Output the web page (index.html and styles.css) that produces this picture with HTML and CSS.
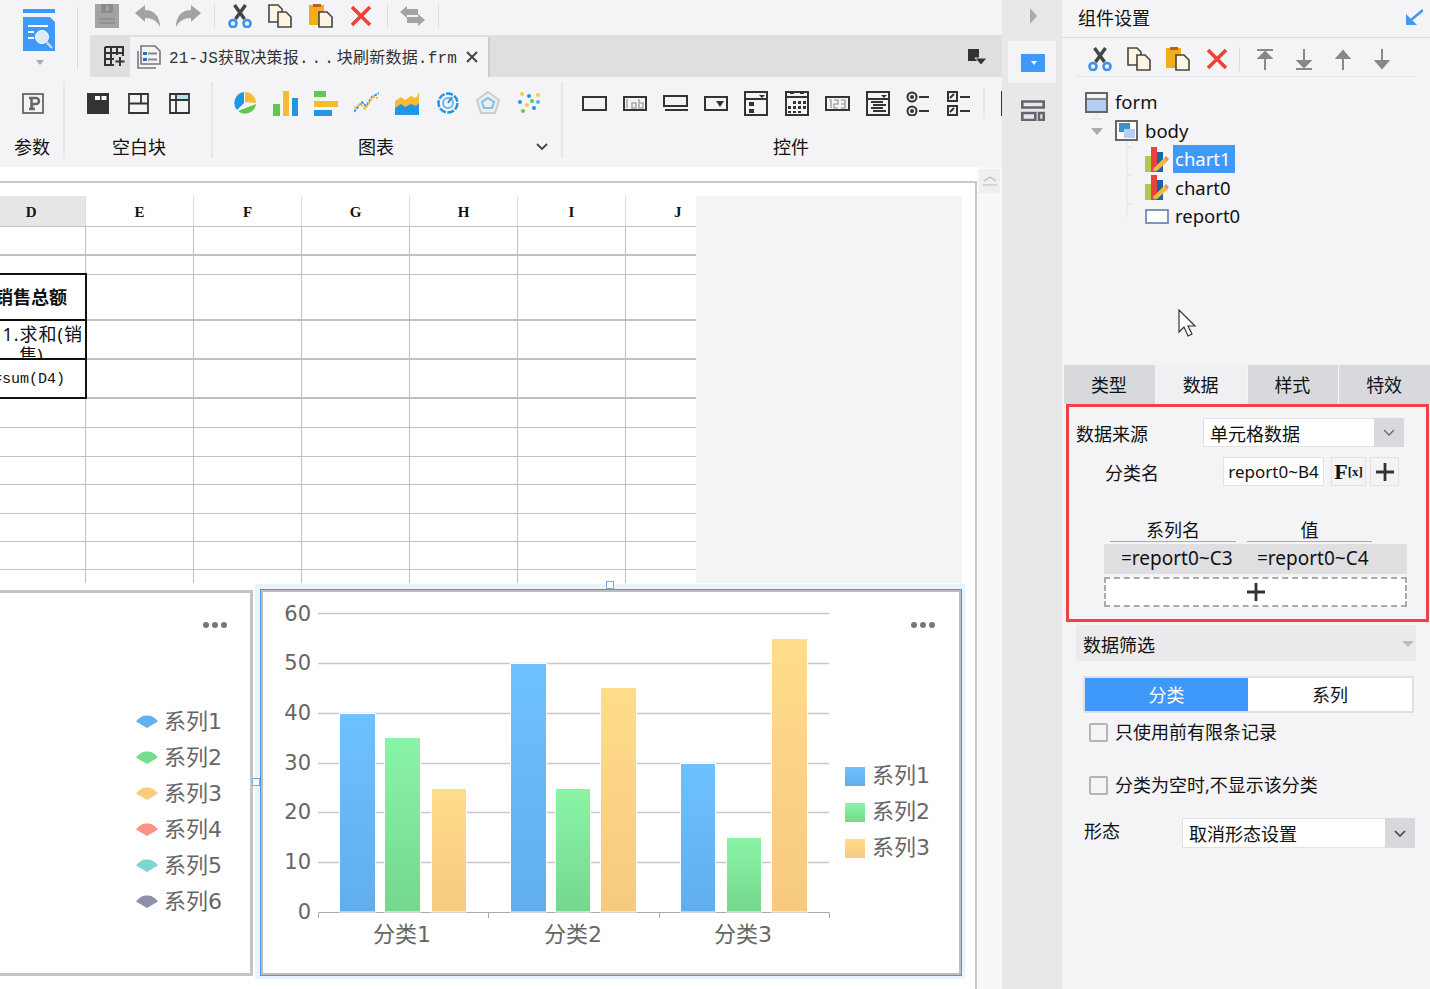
FILE: index.html
```html
<!DOCTYPE html>
<html lang="zh-CN">
<head>
    <meta charset="UTF-8">
    <title>决策报表设计器</title>
    <link rel="stylesheet" href="styles.css">
</head>
<body>
    <!-- Icones reutilizados -->
    <svg class="defs" width="0" height="0">
        <symbol id="i-cut" viewBox="0 0 24 24">
            <path d="M7.500 15 17.500 1M16.500 15 6.500 1" stroke="#444" stroke-width="3.400" fill="none"/>
            <circle cx="5" cy="19.500" r="3.500" stroke="#3f8fef" stroke-width="2.600" fill="none"/>
            <circle cx="19" cy="19.500" r="3.500" stroke="#3f8fef" stroke-width="2.600" fill="none"/>
        </symbol>
        <symbol id="i-copy" viewBox="0 0 24 24">
            <path d="M1 1h9l4 4v13H1z" fill="#fdf5e1" stroke="#444" stroke-width="1.600"/>
            <path d="M10 8h8l5 5v10H10z" fill="#fdf5e1" stroke="#444" stroke-width="1.600"/>
        </symbol>
        <symbol id="i-paste" viewBox="0 0 24 24">
            <rect x="0" y="1" width="15" height="20" fill="#f2ae16"/>
            <rect x="4" y="0" width="8" height="3" fill="#b9602a"/>
            <path d="M10 8h8l5 5v10H10z" fill="#fdf5e1" stroke="#444" stroke-width="1.600"/>
        </symbol>
        <symbol id="i-del" viewBox="0 0 24 24">
            <path d="M3 3 21 21M21 3 3 21" stroke="#ee4138" stroke-width="3.600" fill="none"/>
        </symbol>
        <symbol id="i-chart" viewBox="0 0 24 25">
            <rect x="0" y="9" width="6" height="16" fill="#b5c84e"/>
            <rect x="6" y="0" width="6" height="25" fill="#e8423c"/>
            <rect x="12" y="5" width="6" height="20" fill="#1767a8"/>
            <path d="M8 22 19 11l4 3-11 10H8z" fill="#f5b940"/>
            <path d="M19 11l2-2 3 3-2 2z" fill="#ef8a6a"/>
            <path d="M8 20l3 4H8z" fill="#aaa"/>
        </symbol>
        <symbol id="i-fan" viewBox="0 0 22 13">
            <path d="M0 6.500C4 1.500 7 .5 11 .5s7 1 11 6l-11 6.500z"/>
        </symbol>
    </svg>

    <div class="app">
        <div class="main">
            <div class="top">
                <div class="logo-col">
                    <svg width="32" height="42" viewBox="0 0 32 42">
                        <rect width="32" height="4" fill="#3f99fb"/>
                        <path d="M0 8h27l5 5v29H0z" fill="#3f99fb"/>
                        <path d="M5 17h20M5 23h6M5 29h6" stroke="#fff" stroke-width="2"/>
                        <circle cx="19" cy="28" r="6.500" fill="#dcebfa" stroke="#fff" stroke-width="1"/>
                        <path d="M23.500 33 29 39" stroke="#c8d8ea" stroke-width="2.500"/>
                    </svg>
                    <span class="logo-arrow"></span>
                </div>
                <div class="top-right">
                    <div class="quick">
                        <span class="tool">
                            <svg width="24" height="24" viewBox="0 0 24 24"><path d="M0 0h24v24H0z" fill="#a3a3a3"/><rect x="6" y="0" width="12" height="9" fill="#8c8c8c"/><rect x="11" y="2" width="3" height="5" fill="#a3a3a3"/><path d="M4 15h16M4 19h16" stroke="#8c8c8c" stroke-width="1.500"/></svg>
                        </span>
                        <span class="tool">
                            <svg width="26" height="24" viewBox="0 0 26 24"><path d="M0 9 10 1v5c9 0 15 6 15 17-3-6-8-9-15-9v4z" fill="#a3a3a3"/></svg>
                        </span>
                        <span class="tool">
                            <svg width="26" height="24" viewBox="0 0 26 24"><path d="M26 9 16 1v5C7 6 1 12 1 23c3-6 8-9 15-9v4z" fill="#a3a3a3"/></svg>
                        </span>
                        <span class="sep"></span>
                        <span class="tool"><svg width="24" height="24"><use href="#i-cut"/></svg></span>
                        <span class="tool"><svg width="24" height="24"><use href="#i-copy"/></svg></span>
                        <span class="tool"><svg width="24" height="24"><use href="#i-paste"/></svg></span>
                        <span class="tool"><svg width="24" height="24"><use href="#i-del"/></svg></span>
                        <span class="sep"></span>
                        <span class="tool">
                            <svg width="25" height="20" viewBox="0 0 25 20"><path d="M0 6 7 0v3h11v6H7v3zM25 14l-7-6v3H7v6h11v3z" fill="#a3a3a3"/></svg>
                        </span>
                        <span class="sep"></span>
                    </div>
                    <div class="tabbar">
                        <span class="tab-add">
                            <svg width="21" height="21" viewBox="0 0 21 21"><path d="M1 1h18v9M1 1v18h9M7 1v18M13 1v8M1 7h18M1 13h9" stroke="#333" stroke-width="2" fill="none"/><path d="M16 11v9M11.500 15.500h9" stroke="#333" stroke-width="2"/></svg>
                        </span>
                        <div class="tab">
                            <svg width="24" height="24" viewBox="0 0 24 24"><path d="M4 1h14l5 5v13H4z" fill="#f4f4f6" stroke="#777" stroke-width="1.600"/><path d="M1 6v17h18" fill="none" stroke="#777" stroke-width="1.600"/><rect x="6" y="7" width="4" height="3" fill="#2a6fc0"/><rect x="6" y="13" width="4" height="3" fill="#2a6fc0"/><path d="M11 8.500h9M11 14.500h9" stroke="#888" stroke-width="2"/></svg>
                            <span class="tab-title">21-JS获取决策报<span class="dots">...</span>块刷新数据.frm</span>
                            <svg class="tab-close" width="12" height="12" viewBox="0 0 12 12"><path d="M1 1 11 11M11 1 1 11" stroke="#444" stroke-width="2"/></svg>
                        </div>
                        <svg class="tab-menu" width="19" height="17" viewBox="0 0 19 17"><rect width="11" height="12" fill="#333"/><path d="M7 9h12l-6 7z" fill="#333" stroke="#dfdfe1"/></svg>
                    </div>
                </div>
            </div>

            <div class="ribbon">
                <div class="rgroup rg-param">
                    <div class="ricons">
                        <span class="ricon">
                            <svg width="22" height="21" viewBox="0 0 22 21"><rect x="1" y="1" width="20" height="19" fill="none" stroke="#666" stroke-width="1.800"/><path d="M7 5h7a3 3 0 0 1 0 6h-4v5M7 16h6M9.500 5v11" stroke="#666" stroke-width="2.500" fill="none"/></svg>
                        </span>
                    </div>
                    <div class="rlabel">参数</div>
                </div>
                <div class="rgroup rg-blank">
                    <div class="ricons">
                        <span class="ricon"><svg width="22" height="21" viewBox="0 0 22 21"><rect width="22" height="21" fill="#333"/><rect x="8" y="3" width="5" height="4" fill="#fff"/><rect x="14.500" y="3" width="5" height="4" fill="#fff"/></svg></span>
                        <span class="ricon"><svg width="21" height="21" viewBox="0 0 21 21"><path d="M1 1h19v19H1zM1 10.500h19M13 1v9.500" fill="none" stroke="#333" stroke-width="1.800"/></svg></span>
                        <span class="ricon"><svg width="21" height="21" viewBox="0 0 21 21"><rect x="7" y="1" width="13" height="6" fill="#b5e0f5"/><path d="M1 1h19v19H1zM1 7h19M7 1v19" fill="none" stroke="#333" stroke-width="1.800"/></svg></span>
                    </div>
                    <div class="rlabel">空白块</div>
                </div>
                <div class="rgroup rg-chart">
                    <div class="ricons">
                        <span class="ricon"><svg width="24" height="24" viewBox="0 0 24 24"><path d="M12 11V1a11 11 0 0 1 11 11z" fill="#f7bb33"/><path d="M23 13a11 11 0 0 1-18 7z" fill="#5ec94e"/><path d="M11 1v11L4 19A11 11 0 0 1 11 1z" fill="#2196e3"/></svg></span>
                        <span class="ricon"><svg width="25" height="25" viewBox="0 0 25 25"><rect y="13" width="7" height="12" fill="#5ec94e"/><rect x="10" width="6" height="25" fill="#f7bb33"/><rect x="19" y="7" width="6" height="18" fill="#2196e3"/></svg></span>
                        <span class="ricon"><svg width="24" height="25" viewBox="0 0 24 25"><rect width="12" height="6" fill="#5ec94e"/><rect y="10" width="24" height="6" fill="#f7bb33"/><rect y="19" width="18" height="6" fill="#2196e3"/></svg></span>
                        <span class="ricon"><svg width="25" height="22" viewBox="0 0 25 22"><path d="M0 20 8 10l4 4 6-9 7-4" fill="none" stroke="#2196e3" stroke-width="1.800" stroke-dasharray="3 1"/><path d="M0 16l7-4 4 5 8-12 5 1" fill="none" stroke="#f7bb33" stroke-width="1.800" stroke-dasharray="3 1"/></svg></span>
                        <span class="ricon"><svg width="24" height="24" viewBox="0 0 24 24"><path d="M0 10 6 6l4 3 6-4 5 2 3-6v23H0z" fill="#f7bb33"/><path d="M0 17l6-4 4 3 6-3 5 2 3-3v12H0z" fill="#2196e3"/></svg></span>
                        <span class="ricon"><svg width="22" height="22" viewBox="0 0 22 22"><circle cx="11" cy="11" r="9.500" fill="none" stroke="#2196e3" stroke-width="2.500" stroke-dasharray="7 1.500"/><circle cx="11" cy="11" r="5" fill="none" stroke="#6bb8ee" stroke-width="2"/><path d="M11 11l4-6" stroke="#2196e3" stroke-width="2"/></svg></span>
                        <span class="ricon"><svg width="24" height="24" viewBox="0 0 24 24"><path d="M12 1 23 9l-4 13H5L1 9z" fill="#eee" stroke="#ccc" stroke-width="2"/><path d="M12 7l6 4-2 6H8l-2-6z" fill="none" stroke="#7cbfee" stroke-width="2"/></svg></span>
                        <span class="ricon"><svg width="24" height="24" viewBox="0 0 24 24"><circle cx="5" cy="3" r="2" fill="#f7c84a"/><circle cx="12" cy="5" r="2" fill="#2196e3"/><circle cx="21" cy="4" r="2" fill="#f7c84a"/><circle cx="3" cy="11" r="2" fill="#2196e3"/><circle cx="15" cy="10" r="2" fill="#5ec94e"/><circle cx="21" cy="11" r="2" fill="#5cb4ee"/><circle cx="10" cy="14" r="2" fill="#f7c84a"/><circle cx="6" cy="20" r="2" fill="#5ec94e"/><circle cx="17" cy="17" r="2" fill="#2196e3"/></svg></span>
                    </div>
                    <div class="rlabel">图表</div>
                    <svg class="rg-more" width="12" height="8" viewBox="0 0 12 8"><path d="M1 1l5 5 5-5" fill="none" stroke="#444" stroke-width="1.800"/></svg>
                </div>
                <div class="rgroup rg-ctrl">
                    <div class="ricons">
                        <span class="ricon"><svg class="ctl" width="25" height="15" viewBox="0 0 25 15"><rect x="1" y="1" width="23" height="13"/></svg></span>
                        <span class="ricon"><svg class="ctl" width="24" height="15" viewBox="0 0 24 15"><rect x="1" y="1" width="22" height="13"/><path class="ctl-soft" d="M4 3v9M9 12V7h4v5zM16 3v9h4V7h-4"/></svg></span>
                        <span class="ricon"><svg class="ctl" width="25" height="16" viewBox="0 0 25 16"><rect x="1" y="1" width="23" height="10"/><path d="M2 15h23"/></svg></span>
                        <span class="ricon"><svg class="ctl" width="24" height="15" viewBox="0 0 24 15"><rect x="1" y="1" width="22" height="13"/><path class="ctl-solid" d="M12 5h8l-4 6z"/></svg></span>
                        <span class="ricon"><svg class="ctl" width="24" height="25" viewBox="0 0 24 25"><rect x="1" y="1" width="22" height="23"/><path d="M1 8h22"/><path class="ctl-solid" d="M15 4h6l-3 3zM5 11h5v4H5zM5 18h5v4H5z"/></svg></span>
                        <span class="ricon"><svg class="ctl" width="24" height="25" viewBox="0 0 24 25"><rect x="1" y="1" width="22" height="23"/><path d="M1 6h22" stroke-width="3"/><path class="ctl-solid" d="M5 0h4v3H5zM15 0h4v3h-4zM8 10h3v3H8zM13 10h3v3h-3zM18 10h3v3h-3zM3 15h3v3H3zM8 15h3v3H8zM13 15h3v3h-3zM18 15h3v3h-3zM3 20h3v2H3zM8 20h3v2H8zM13 20h3v2h-3z"/></svg></span>
                        <span class="ricon"><svg class="ctl" width="25" height="15" viewBox="0 0 25 15"><rect x="1" y="1" width="23" height="13"/><path class="ctl-soft" d="M4 4h2v8M9 4h4v4H9v4h4M16 4h4v8h-4M16 8h4"/></svg></span>
                        <span class="ricon"><svg class="ctl" width="24" height="25" viewBox="0 0 24 25"><rect x="1" y="1" width="22" height="23"/><path d="M1 8h22M5 11h12M7 14h13M5 17h12M7 20h13"/><path class="ctl-solid" d="M15 4h6l-3 3z"/></svg></span>
                        <span class="ricon"><svg class="ctl" width="24" height="25" viewBox="0 0 24 25"><circle cx="6" cy="6" r="4.500"/><circle cx="6" cy="20" r="4.500"/><circle class="ctl-solid" cx="6" cy="6" r="2"/><circle class="ctl-solid" cx="6" cy="20" r="2"/><path d="M13 6h10M13 20h10"/></svg></span>
                        <span class="ricon"><svg class="ctl" width="24" height="25" viewBox="0 0 24 25"><rect x="1" y="1" width="9" height="9"/><rect x="1" y="15" width="9" height="9"/><path d="M3 7l4-4M3 21l4-4M13 6h10M13 20h10"/></svg></span>
                        <span class="rsep"></span>
                        <span class="ricon"><svg class="ctl" width="24" height="25" viewBox="0 0 24 25"><rect x="1" y="1" width="22" height="23"/></svg></span>
                    </div>
                    <div class="rlabel">控件</div>
                </div>
            </div>

            <div class="canvas">
                <div class="sheet">
                    <div class="grid-wrap">
                        <table class="grid">
                            <tr class="r-head">
                                <th class="col-on">D</th><th>E</th><th>F</th><th>G</th><th>H</th><th>I</th><th class="col-j">J</th>
                            </tr>
                            <tr class="r29 thick"><td></td><td></td><td></td><td></td><td></td><td></td><td></td></tr>
                            <tr class="r19"><td></td><td></td><td></td><td></td><td></td><td></td><td></td></tr>
                            <tr class="r46 thick"><td class="cell-b cell-title">销售总额</td><td></td><td></td><td></td><td></td><td></td><td></td></tr>
                            <tr class="r39 thick"><td class="cell-b"><div class="clip"><span class="clip-a">1.求和(销</span><span class="clip-b">售)</span></div></td><td></td><td></td><td></td><td></td><td></td><td></td></tr>
                            <tr class="r39 thick"><td class="cell-b cell-sum">=sum(D4)</td><td></td><td></td><td></td><td></td><td></td><td></td></tr>
                            <tr class="r29"><td></td><td></td><td></td><td></td><td></td><td></td><td></td></tr>
                            <tr class="r29"><td></td><td></td><td></td><td></td><td></td><td></td><td></td></tr>
                            <tr class="r28"><td></td><td></td><td></td><td></td><td></td><td></td><td></td></tr>
                            <tr class="r29"><td></td><td></td><td></td><td></td><td></td><td></td><td></td></tr>
                            <tr class="r28"><td></td><td></td><td></td><td></td><td></td><td></td><td></td></tr>
                            <tr class="r28"><td></td><td></td><td></td><td></td><td></td><td></td><td></td></tr>
                            <tr class="r14"><td></td><td></td><td></td><td></td><td></td><td></td><td></td></tr>
                        </table>
                        <div class="grid-empty"></div>
                    </div>

                    <div class="widgets">
                        <div class="widget-left">
                            <svg width="250" height="379" viewBox="0 593 250 379">
                                <g class="more"><circle cx="206" cy="625" r="3"/><circle cx="215" cy="625" r="3"/><circle cx="224" cy="625" r="3"/></g>
                                <g class="legend-text">
                                    <use href="#i-fan" x="136" y="715" width="22" height="13" fill="#62b2f2"/><text x="164" y="729">系列1</text>
                                    <use href="#i-fan" x="136" y="751" width="22" height="13" fill="#77dd8e"/><text x="164" y="765">系列2</text>
                                    <use href="#i-fan" x="136" y="787" width="22" height="13" fill="#fbcb7d"/><text x="164" y="801">系列3</text>
                                    <use href="#i-fan" x="136" y="823" width="22" height="13" fill="#fb9389"/><text x="164" y="837">系列4</text>
                                    <use href="#i-fan" x="136" y="859" width="22" height="13" fill="#7dd7cf"/><text x="164" y="873">系列5</text>
                                    <use href="#i-fan" x="136" y="895" width="22" height="13" fill="#8f91ab"/><text x="164" y="909">系列6</text>
                                </g>
                            </svg>
                        </div>
                        <div class="widget-sel">
                            <span class="handle handle-top"></span>
                            <span class="handle handle-left"></span>
                            <div class="widget-inner">
                                <svg width="695" height="379" viewBox="263 592 695 379">
                                    <defs>
                                        <linearGradient id="g-blue" x1="0" y1="0" x2="0" y2="1"><stop offset="0" stop-color="#6dc1ff"/><stop offset="1" stop-color="#62aeec"/></linearGradient>
                                        <linearGradient id="g-green" x1="0" y1="0" x2="0" y2="1"><stop offset="0" stop-color="#8af5a6"/><stop offset="1" stop-color="#74d78d"/></linearGradient>
                                        <linearGradient id="g-yellow" x1="0" y1="0" x2="0" y2="1"><stop offset="0" stop-color="#ffdd8a"/><stop offset="1" stop-color="#f6c97f"/></linearGradient>
                                    </defs>
                                    <g class="gridlines">
                                        <path d="M318 613.500h511M318 663.500h511M318 713.500h511M318 763.500h511M318 812.500h511M318 862.500h511"/>
                                    </g>
                                    <g class="axis"><path d="M318.500 918v-5.500h511v5.500M488.500 913v5M659.500 913v5"/></g>
                                    <g class="ylabels">
                                        <text x="311" y="621">60</text><text x="311" y="670">50</text><text x="311" y="720">40</text><text x="311" y="770">30</text><text x="311" y="819">20</text><text x="311" y="869">10</text><text x="311" y="919">0</text>
                                    </g>
                                    <g class="bars">
                                        <rect x="339.500" y="713.500" width="36" height="198.500" fill="url(#g-blue)"/>
                                        <rect x="384.500" y="737.500" width="36" height="174.500" fill="url(#g-green)"/>
                                        <rect x="431.500" y="788.500" width="35" height="123.500" fill="url(#g-yellow)"/>
                                        <rect x="510.500" y="663.500" width="36" height="248.500" fill="url(#g-blue)"/>
                                        <rect x="555.500" y="788.500" width="35" height="123.500" fill="url(#g-green)"/>
                                        <rect x="600.500" y="687.500" width="36" height="224.500" fill="url(#g-yellow)"/>
                                        <rect x="680.500" y="763.500" width="35" height="148.500" fill="url(#g-blue)"/>
                                        <rect x="726.500" y="837.500" width="35" height="74.500" fill="url(#g-green)"/>
                                        <rect x="771.500" y="638.500" width="36" height="273.500" fill="url(#g-yellow)"/>
                                    </g>
                                    <g class="xlabels">
                                        <text x="402" y="942">分类1</text><text x="573" y="942">分类2</text><text x="743" y="942">分类3</text>
                                    </g>
                                    <g class="more"><circle cx="914" cy="625" r="3"/><circle cx="923" cy="625" r="3"/><circle cx="932" cy="625" r="3"/></g>
                                    <g class="legend-text">
                                        <rect x="845" y="767" width="20" height="19" fill="url(#g-blue)"/><text x="872" y="783">系列1</text>
                                        <rect x="845" y="803" width="20" height="19" fill="url(#g-green)"/><text x="872" y="819">系列2</text>
                                        <rect x="845" y="839" width="20" height="19" fill="url(#g-yellow)"/><text x="872" y="855">系列3</text>
                                    </g>
                                </svg>
                            </div>
                        </div>
                    </div>
                </div>
                <div class="vscroll">
                    <span class="vscroll-up">
                        <svg width="14" height="10" viewBox="0 0 14 10"><path d="M1 5l6-4 6 4M0 9h14" fill="none" stroke="#bbb" stroke-width="1.200"/></svg>
                    </span>
                </div>
            </div>
        </div>

        <div class="rail">
            <span class="rail-arrow"></span>
            <div class="rail-on">
                <svg width="24" height="18" viewBox="0 0 24 18"><rect width="24" height="18" fill="#3f99fb"/><path d="M10 7h6l-3 4z" fill="#fff"/></svg>
            </div>
            <div class="rail-off">
                <svg width="24" height="21" viewBox="0 0 24 21"><path d="M1.300 1.500h21.400v6H1.300zM1.300 13h13v7h-13zM18 13h4.700v7H18z" fill="none" stroke="#63646e" stroke-width="2.600"/></svg>
            </div>
        </div>

        <div class="panel">
            <div class="panel-head">
                <span>组件设置</span>
                <svg width="17" height="16" viewBox="0 0 17 16"><path d="M17 1 5 11" stroke="#3f99fb" stroke-width="2.500"/><path d="M0 5v11h11z" fill="#3f99fb"/></svg>
            </div>
            <div class="panel-tools">
                <span class="ptool"><svg width="24" height="24"><use href="#i-cut"/></svg></span>
                <span class="ptool"><svg width="24" height="24"><use href="#i-copy"/></svg></span>
                <span class="ptool"><svg width="24" height="24"><use href="#i-paste"/></svg></span>
                <span class="ptool"><svg width="24" height="24"><use href="#i-del"/></svg></span>
                <span class="psep"></span>
                <span class="ptool"><svg width="16" height="21" viewBox="0 0 16 21"><path d="M0 1h16M8 21V7M2 9l6-6 6 6z" stroke="#888" stroke-width="2" fill="#888"/></svg></span>
                <span class="ptool"><svg width="16" height="21" viewBox="0 0 16 21"><path d="M0 20h16M8 0v14M2 12l6 6 6-6z" stroke="#888" stroke-width="2" fill="#888"/></svg></span>
                <span class="ptool"><svg width="16" height="21" viewBox="0 0 16 21"><path d="M8 21V7M2 9l6-7 6 7z" stroke="#888" stroke-width="2" fill="#888"/></svg></span>
                <span class="ptool"><svg width="16" height="21" viewBox="0 0 16 21"><path d="M8 0v14M2 12l6 7 6-7z" stroke="#888" stroke-width="2" fill="#888"/></svg></span>
            </div>
            <div class="tree">
                <svg class="tree-lines" width="70" height="140" viewBox="0 0 70 140"><path d="M35 28v12M28 42h12M65 62v78M65 70h8M65 98h8M65 127h8" stroke="#e2e2e4" fill="none"/></svg>
                <div class="node lvl0">
                    <svg width="23" height="21" viewBox="0 0 23 21"><rect x="1" y="1" width="21" height="19" fill="#b6cff0" stroke="#666" stroke-width="2"/><rect x="2" y="2" width="19" height="5" fill="#f4f4f6"/><path d="M1 7h21" stroke="#666" stroke-width="1.500"/></svg>
                    <span>form</span>
                </div>
                <div class="node lvl1">
                    <span class="node-toggle"></span>
                    <svg width="23" height="21" viewBox="0 0 23 21"><rect x="1" y="1" width="21" height="19" fill="#fff" stroke="#666" stroke-width="2"/><rect x="4" y="3" width="11" height="9" fill="#3d8fc8"/><rect x="9" y="9" width="11" height="9" fill="#b6cff0"/></svg>
                    <span>body</span>
                </div>
                <div class="node lvl2">
                    <svg width="24" height="25"><use href="#i-chart"/></svg>
                    <span class="node-on">chart1</span>
                </div>
                <div class="node lvl2">
                    <svg width="24" height="25"><use href="#i-chart"/></svg>
                    <span>chart0</span>
                </div>
                <div class="node lvl2">
                    <svg width="24" height="15" viewBox="0 0 24 15"><rect x="1" y="1" width="22" height="13" fill="#fff" stroke="#5d7fb0" stroke-width="1.600"/></svg>
                    <span>report0</span>
                </div>
                <svg class="cursor" width="20" height="28" viewBox="0 0 20 28"><path d="M1 1v22l5-5 4 9 4-2-4-8h7z" fill="#fff" stroke="#333" stroke-width="1.200"/></svg>
            </div>
            <div class="tabs">
                <span class="ptab">类型</span>
                <span class="ptab ptab-on">数据</span>
                <span class="ptab">样式</span>
                <span class="ptab">特效</span>
            </div>

            <div class="dsrc">
                <div class="row-src">
                    <span class="lbl-src">数据来源</span>
                    <div class="select sel-src">
                        <span class="sel-text">单元格数据</span>
                        <span class="sel-btn"><svg width="12" height="7" viewBox="0 0 12 7"><path d="M1 1l5 5 5-5" fill="none" stroke="#666" stroke-width="1.300"/></svg></span>
                    </div>
                </div>
                <div class="row-cat">
                    <span class="lbl-cat">分类名</span>
                    <span class="input">report0~B4</span>
                    <span class="sq-btn sq-fx"><b>F</b><i>[x]</i></span>
                    <span class="sq-btn sq-plus"><svg width="18" height="18" viewBox="0 0 18 18"><path d="M9 0v18M0 9h18" stroke="#333" stroke-width="2.800"/></svg></span>
                </div>
                <div class="series">
                    <div class="series-head">
                        <span class="sh-name">系列名</span>
                        <span class="sh-val">值</span>
                    </div>
                    <div class="series-row">
                        <span class="sr-name">=report0~C3</span>
                        <span class="sr-val">=report0~C4</span>
                    </div>
                    <div class="series-add">
                        <svg width="18" height="18" viewBox="0 0 18 18"><path d="M9 0v18M0 9h18" stroke="#333" stroke-width="2.800"/></svg>
                    </div>
                </div>
            </div>

            <div class="filter-head">
                <span>数据筛选</span>
                <span class="filter-arrow"></span>
            </div>
            <div class="segment">
                <span class="seg seg-on">分类</span>
                <span class="seg">系列</span>
            </div>
            <label class="check check-a"><span class="box"></span><span class="check-text">只使用前有限条记录</span></label>
            <label class="check check-b"><span class="box"></span><span class="check-text">分类为空时,不显示该分类</span></label>
            <div class="row-form">
                <span class="lbl-form">形态</span>
                <div class="select sel-form">
                    <span class="sel-text">取消形态设置</span>
                    <span class="sel-btn"><svg width="12" height="7" viewBox="0 0 12 7"><path d="M1 1l5 5 5-5" fill="none" stroke="#444" stroke-width="1.600"/></svg></span>
                </div>
            </div>
        </div>
    </div>
</body>
</html>
```

FILE: styles.css
```css
* {
    box-sizing: border-box;
}

body {
    margin: 0;
    width: 1430px;
    height: 989px;
    overflow: hidden;
    background: #f4f4f6;
    color: #111;
    font-family: "Noto Sans", "Noto Sans CJK SC", sans-serif;
    font-size: 18px;
}

.defs {
    position: absolute;
}

svg {
    display: block;
}

.app {
    display: flex;
    height: 989px;
}

.main {
    width: 1002px;
    display: flex;
    flex-direction: column;
    overflow: hidden;
}

/* Barra de cima */
.top {
    display: flex;
    height: 77px;
    flex: none;
}

.logo-col {
    width: 87px;
    flex: none;
    padding: 9px 0 0 23px;
    position: relative;
}

.logo-col::after {
    content: "";
    position: absolute;
    left: 77px;
    top: 7px;
    height: 63px;
    width: 1px;
    background: #dcdcde;
}

.logo-arrow {
    display: block;
    margin: 9px 0 0 13px;
    width: 0;
    border: 4px solid transparent;
    border-top: 5px solid #aaa;
    border-bottom: 0;
}

.top-right {
    flex: 1;
    min-width: 0;
}

.quick {
    display: flex;
    align-items: center;
    height: 35px;
    padding-bottom: 3px;
}

.tool {
    width: 40.5px;
    display: flex;
    justify-content: center;
}

.sep {
    width: 1px;
    height: 24px;
    margin: 0 5px;
    background: #dcdcde;
}

.tabbar {
    height: 42px;
    margin-left: 3px;
    background: #dfdfe1;
    display: flex;
    align-items: flex-end;
    position: relative;
}

.tab-add {
    width: 40px;
    height: 42px;
    padding: 11px 0 0 14px;
}

.tab {
    width: 360px;
    height: 40px;
    background: #f4f4f6;
    border-right: 2px solid #ccc;
    display: flex;
    align-items: center;
    padding-left: 7px;
}

.tab-title {
    margin: -3px 0 0 8px;
    font-family: "Liberation Mono", "Noto Sans CJK SC", monospace;
    font-size: 16px;
    color: #333;
    white-space: nowrap;
    letter-spacing: 0.2px;
}

.dots {
    letter-spacing: 3px;
}

.tab-close {
    margin-left: 9px;
}

.tab-menu {
    margin: 0 0 11px 478px;
}

/* Faixa de componentes */
.ribbon {
    display: flex;
    height: 90px;
    flex: none;
    padding-top: 5px;
}

.rgroup {
    position: relative;
    height: 76px;
    border-right: 2px solid #e8e8e2;
    padding-right: 1px;
}

.rg-param {
    width: 65px;
    padding-left: 13px;
    margin-right: 1px;
}

.rg-blank {
    width: 147px;
    padding-left: 12px;
}

.rg-chart {
    width: 350px;
    padding-left: 12px;
}

.rg-ctrl {
    flex: 1;
    min-width: 0;
    padding-left: 11px;
    border-right: 0;
    overflow: hidden;
}

.ricons {
    display: flex;
    align-items: center;
    height: 42px;
}

.ricons .ricon {
    width: 40.5px;
    flex: none;
    display: flex;
    justify-content: center;
}

.rsep {
    width: 2px;
    height: 30px;
    flex: none;
    margin-left: 4px;
    background: #e8e8e2;
}

.rg-ctrl .ricon:last-child {
    margin-left: 8px;
}

.rlabel {
    margin-top: 12px;
    line-height: 22px;
    text-align: center;
}

.rg-param .rlabel {
    text-align: left;
    margin-left: 1px;
}

.rg-blank .rlabel {
    padding-right: 10px;
}

.rg-chart .rlabel {
    padding-right: 33px;
}

.rg-ctrl .rlabel {
    padding-left: 7px;
}

.rg-more {
    position: absolute;
    left: 323px;
    top: 61px;
}

.ctl rect,
.ctl path,
.ctl circle {
    fill: none;
    stroke: #333;
    stroke-width: 2;
}

.ctl .ctl-solid {
    fill: #333;
    stroke: none;
}

.ctl .ctl-soft {
    stroke: #aaa;
    stroke-width: 1.600;
}

/* Area de desenho */
.canvas {
    flex: 1;
    display: flex;
    background: #fff;
    min-height: 0;
}

.sheet {
    width: 977px;
    flex: none;
    margin-top: 14px;
    border-top: 2px solid #c8c8c8;
    border-right: 2px solid #c8c8c8;
    padding-top: 13px;
    overflow: hidden;
}

.grid-wrap {
    display: flex;
    height: 387px;
    margin-left: -23px;
    overflow: hidden;
}

.grid {
    width: 718px;
    flex: none;
    table-layout: fixed;
    border-collapse: collapse;
}

.grid th {
    width: 108px;
    height: 30px;
    padding: 4px 0 0;
    border-left: 1px solid #ddd;
    border-bottom: 1px solid #c0c0c0;
    font-family: "Liberation Serif", serif;
    font-size: 15px;
    font-weight: bold;
}

.grid th.col-j {
    width: 70px;
    padding-left: 34px;
}

.grid th.col-on {
    background: #e6e6e6;
    border-left: 0;
}

.grid td {
    padding: 0;
    border: 1px solid #c0c0c0;
    text-align: center;
}

.grid .thick td {
    border-bottom: 2px solid #c0c0c0;
}

.grid tr td:last-child,
.grid tr th:last-child {
    border-right: 0;
}

.r29 td { height: 29px; }
.r28 td { height: 28px; }
.r19 td { height: 19px; }
.r46 td { height: 46px; }
.r39 td { height: 39px; }
.r14 td { height: 14px; border-bottom: 0; }

.grid .thick .cell-b {
    border: 2px solid #111;
    border-left: 0;
    font-size: 18px;
    line-height: 22px;
}

.cell-title {
    font-weight: bold;
}

.clip {
    height: 37px;
    overflow: hidden;
    padding-top: 3px;
    line-height: 21px;
}

.clip-a {
    display: block;
    text-align: left;
    padding-left: 25px;
    letter-spacing: 1px;
    white-space: nowrap;
}

.clip-b {
    display: block;
}

.grid .thick .cell-sum {
    font-family: "Liberation Mono", "Noto Sans CJK SC", monospace;
    font-size: 15px;
    padding: 3px 4px 0 0;
}

.grid-empty {
    width: 266px;
    flex: none;
    background: #f4f4f6;
}

.widgets {
    display: flex;
    align-items: flex-start;
    margin-top: 1px;
}

.widget-left {
    width: 256px;
    height: 386px;
    flex: none;
    margin: 6px 0 0 -3px;
    border: 3px solid #c4c4c4;
    background: #fff;
}

.widget-sel {
    position: relative;
    width: 710px;
    height: 395px;
    flex: none;
    margin-left: 2px;
    padding: 5px 3px 3px 5px;
    background: #e8f3fd;
}

.widget-inner {
    height: 387px;
    border: 1px solid #4a97ea;
    box-shadow: inset 0 0 0 2px #bdbdbd;
    padding: 2px;
    background: #fff;
}

.handle {
    position: absolute;
    width: 8px;
    height: 8px;
    background: #fff;
    border: 1px solid #7ea9d8;
}

.handle-top {
    left: 351px;
    top: -3px;
}

.handle-left {
    left: -3px;
    top: 194px;
}

.more circle {
    fill: #777;
}

.legend-text text,
.xlabels text {
    font-family: "DejaVu Sans", "Noto Sans CJK SC", sans-serif;
    font-size: 22px;
    fill: #666;
}

.xlabels text {
    text-anchor: middle;
}

.ylabels text {
    font-family: "DejaVu Sans", sans-serif;
    font-size: 21px;
    fill: #666;
    text-anchor: end;
}

.gridlines path {
    stroke: #c8c8c8;
    stroke-width: 1.500;
    fill: none;
}

.axis path {
    stroke: #aaa;
    stroke-width: 1;
    fill: none;
}

.bars rect {
    stroke: #fff;
    stroke-width: 1;
}

.vscroll {
    flex: 1;
    background: #f8f8f6;
    padding: 2px 0 0 2px;
}

.vscroll-up {
    display: flex;
    width: 21px;
    height: 24px;
    align-items: center;
    justify-content: center;
    background: #efefed;
}

/* Coluna estreita */
.rail {
    width: 60px;
    flex: none;
    background: #e8e8e8;
    padding-top: 8px;
}

.rail-arrow {
    display: block;
    width: 0;
    margin-left: 28px;
    border: 8px solid transparent;
    border-left: 7px solid #aaa;
    border-right: 0;
}

.rail-on {
    margin: 17px 6px 0;
    height: 42px;
    background: #f4f4f6;
    padding: 13px 0 0 13px;
}

.rail-off {
    padding: 17px 0 0 19px;
}

/* Painel da direita */
.panel {
    width: 368px;
    flex: none;
    background: #f4f4f6;
}

.panel-head {
    height: 38px;
    display: flex;
    align-items: center;
    justify-content: space-between;
    padding: 0 7px 3px 16px;
    border-bottom: 1px solid #dcdcde;
}

.panel-tools {
    height: 39px;
    display: flex;
    align-items: center;
    margin: 0 14px 0 15px;
    padding: 4px 0 0 11px;
    border-bottom: 1px solid #e4e4e6;
}

.ptool {
    width: 39px;
    flex: none;
    display: flex;
    justify-content: flex-start;
}

.ptool:nth-child(n+6) {
    justify-content: center;
}

.ptool:nth-child(4) {
    width: 34px;
}

.psep {
    width: 1px;
    height: 24px;
    background: #dcdcde;
    margin-right: 5px;
}

.tree {
    position: relative;
    height: 288px;
    padding-top: 11px;
    line-height: 28.5px;
    font-size: 18.5px;
}

.tree-lines {
    position: absolute;
    left: 0;
    top: 0;
}

.node {
    height: 28.5px;
    display: flex;
    align-items: center;
    position: relative;
}

.lvl0 {
    padding-left: 23px;
}

.lvl1 {
    padding-left: 53px;
}

.lvl2 {
    padding-left: 83px;
}

.node > svg {
    flex: none;
}

.node > span {
    margin-left: 7px;
}

.lvl2 > span {
    margin-left: 4px;
    padding: 0 2px;
}

.node .node-on {
    background: #3f99fb;
    color: #fff;
    height: 28px;
    line-height: 28px;
    padding: 0 4px 0 2px;
}

.node .node-toggle {
    position: absolute;
    left: 29px;
    top: 11px;
    margin: 0;
    border: 6px solid transparent;
    border-top: 7px solid #aaa;
    border-bottom: 0;
}

.cursor {
    position: absolute;
    left: 116px;
    top: 232px;
}

.tabs {
    display: flex;
    height: 39px;
    margin-left: 2px;
    gap: 1px;
}

.ptab {
    flex: 1;
    background: #d8d9dc;
    text-align: center;
    line-height: 40px;
    padding-right: 1px;
}

.ptab-on {
    background: #f0f0f3;
}

.dsrc {
    height: 218px;
    margin: 0 1px 0 4px;
    border: 3px solid #f04147;
    padding-top: 11px;
}

.row-src {
    display: flex;
    align-items: center;
    padding-left: 7px;
}

.lbl-src {
    width: 127px;
}

.select {
    display: flex;
    background: #fff;
    border: 1px solid #e2e2e4;
    line-height: 30px;
}

.sel-text {
    flex: 1;
    padding-left: 6px;
}

.sel-btn {
    width: 30px;
    margin: -1px -1px -1px 0;
    background: #d8d9dc;
    display: flex;
    align-items: center;
    justify-content: center;
}

.sel-src {
    width: 201px;
    height: 29px;
}

.row-cat {
    display: flex;
    align-items: center;
    height: 29px;
    margin-top: 10px;
    padding-left: 36px;
}

.lbl-cat {
    width: 118px;
}

.input {
    width: 101px;
    height: 29px;
    background: #fff;
    border: 1px solid #e2e2e4;
    text-align: center;
    line-height: 27px;
    font-size: 17px;
}

.sq-btn {
    height: 29px;
    background: #f4f4f6;
    border: 1px solid #e2e2e4;
    display: flex;
    align-items: center;
    justify-content: center;
}

.sq-fx {
    width: 35px;
    margin-left: 7px;
    font-family: "Liberation Serif", serif;
}

.sq-fx b {
    font-size: 22px;
}

.sq-fx i {
    font-size: 13px;
    font-style: normal;
    font-weight: bold;
}

.sq-plus {
    width: 29px;
    margin-left: 4px;
}

.series {
    width: 303px;
    margin: 33px 0 0 35px;
}

.series-head {
    display: flex;
    gap: 11px;
    height: 23px;
    padding-left: 6px;
    line-height: 23px;
    text-align: center;
}

.series-head span {
    border-bottom: 1px solid #aaa;
}

.sh-name {
    width: 126px;
}

.sh-val {
    width: 125px;
}

.series-row {
    display: flex;
    height: 30px;
    margin-top: 2px;
    background: #dfdfe1;
    line-height: 29px;
    padding-left: 17px;
    font-size: 19px;
}

.sr-name {
    width: 136px;
}

.series-add {
    height: 30px;
    margin-top: 3px;
    border: 2px dashed #aaa;
    background: #fff;
    display: flex;
    align-items: center;
    justify-content: center;
}

.filter-head {
    width: 340px;
    height: 36px;
    margin: 3px 0 0 14px;
    padding: 2px 2px 0 7px;
    background: #ebebed;
    display: flex;
    align-items: center;
    justify-content: space-between;
}

.filter-arrow {
    border: 6px solid transparent;
    border-top: 6px solid #bbb;
    border-bottom: 0;
}

.segment {
    display: flex;
    width: 331px;
    height: 37px;
    margin: 15px 0 0 21px;
    border: 2px solid #e0e0e4;
    background: #fff;
}

.seg {
    flex: 1;
    text-align: center;
    line-height: 35px;
}

.seg-on {
    flex: none;
    width: 163px;
    background: #3f99fb;
    color: #fff;
}

.check {
    display: flex;
    align-items: center;
    height: 20px;
    padding-left: 27px;
    white-space: nowrap;
}

.check-a {
    margin-top: 9px;
}

.check-b {
    margin-top: 33px;
}

.check-text {
    margin-top: -2px;
}

.box {
    width: 19px;
    height: 19px;
    margin-right: 7px;
    border: 2px solid #b4b4b4;
    border-radius: 2px;
    background: #f4f4f6;
}

.row-form {
    display: flex;
    margin-top: 23px;
    padding-left: 22px;
}

.lbl-form {
    width: 98px;
    line-height: 26px;
}

.sel-form {
    width: 233px;
    height: 30px;
}
```
